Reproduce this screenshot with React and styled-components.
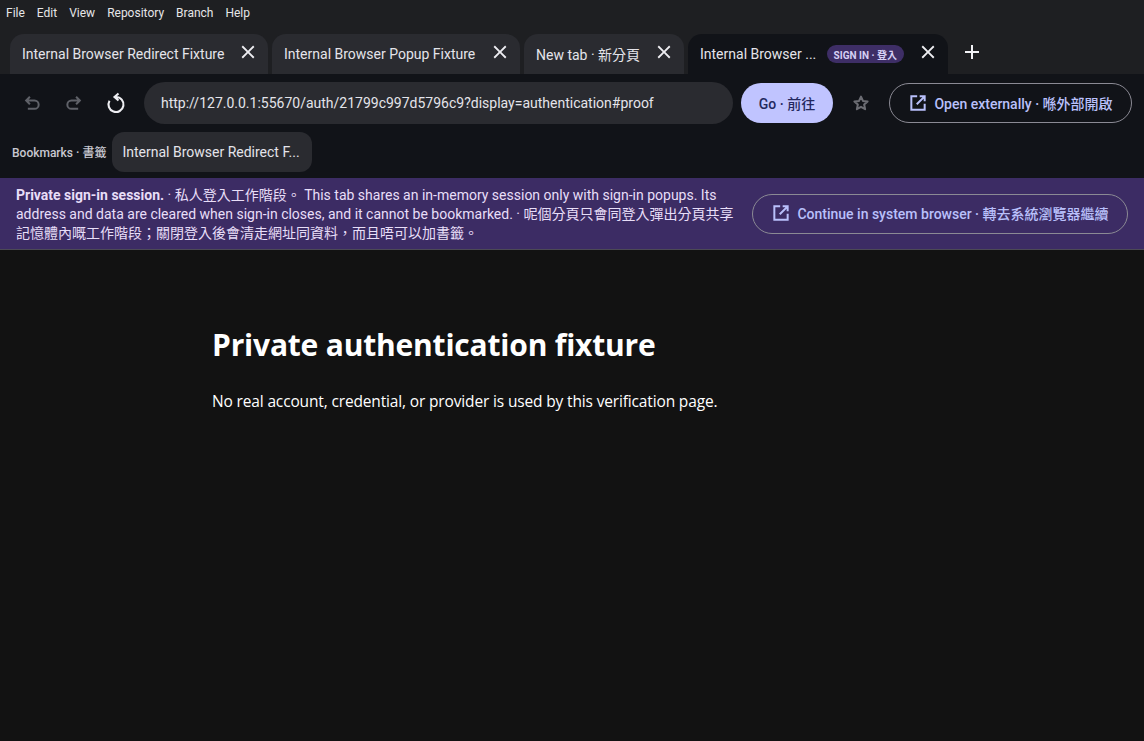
import React from "react";
import styled, { createGlobalStyle } from "styled-components";
import { MdClose, MdAdd } from "react-icons/md";

const cjk = `Roboto, "Noto Sans CJK TC", sans-serif`;

const GlobalStyle = createGlobalStyle`
  html, body { margin: 0; padding: 0; background: #121212; }
  #root { min-height: 100vh; }
  * { box-sizing: border-box; }
`;

const Page = styled.div`
  width: 1144px;
  height: 741px;
  overflow: hidden;
  display: flex;
  flex-direction: column;
  background: #121212;
  font-family: ${cjk};
`;

const MenuBar = styled.div`
  height: 26px;
  padding: 0 6px;
  display: flex;
  align-items: center;
  gap: 12px;
  background: #1e1f22;
  color: #e6e6e8;
  font-size: 12px;
`;

const TabStrip = styled.div`
  height: 48px;
  padding: 8px 10px 0;
  display: flex;
  gap: 4px;
  background: #1e1f22;
`;

const Tab = styled.div`
  width: ${(p) => p.$width}px;
  height: 40px;
  padding: 0 9px 0 12px;
  display: flex;
  align-items: center;
  gap: 8px;
  border-radius: 14px 14px 0 0;
  background: ${(p) => (p.$active ? "#111318" : "#2a2b30")};
  color: #e4e4ea;
  font-size: 14px;
`;

const TabTitle = styled.span`
  flex: 1;
  white-space: nowrap;
  overflow: hidden;
  text-overflow: ellipsis;
`;

const Badge = styled.span`
  height: 18px;
  margin-right: 5px;
  padding: 0 7px;
  display: flex;
  align-items: center;
  border-radius: 9px;
  background: #3e2e66;
  color: #d6d0f5;
  font-size: 10px;
  font-weight: 700;
  white-space: nowrap;
`;

const CloseIcon = styled(MdClose)`
  flex: none;
  font-size: 22px;
  color: #eeeef2;
  margin-top: -5px;
`;

const NewTab = styled(MdAdd)`
  align-self: center;
  margin: -4px 0 0 8px;
  font-size: 24px;
  color: #f2f2f6;
`;

const Toolbar = styled.div`
  height: 58px;
  padding: 0 12px 0 11px;
  display: flex;
  align-items: center;
  background: #111318;
`;

const NavButton = styled.div`
  width: 42px;
  height: 42px;
  display: flex;
  align-items: center;
  justify-content: center;
  color: ${(p) => (p.$on ? "#eeeef2" : "#5f6168")};
`;

const UrlBar = styled.div`
  flex: 1;
  height: 42px;
  margin-left: 7px;
  padding: 0 17px;
  display: flex;
  align-items: center;
  border-radius: 21px;
  background: #2a2b30;
  color: #e4e4ea;
  font-size: 14px;
`;

const GoButton = styled.div`
  width: 92px;
  height: 40px;
  margin-left: 8px;
  display: flex;
  align-items: center;
  justify-content: center;
  border-radius: 20px;
  background: #c0c4ff;
  color: #23285e;
  font-size: 14px;
  font-weight: 500;
`;

const StarButton = styled.div`
  width: 56px;
  display: flex;
  justify-content: center;
  color: #6c6d73;
`;

const OutlineButton = styled.div`
  height: 40px;
  width: ${(p) => p.$width}px;
  padding-bottom: ${(p) => (p.$lift ? 2 : 0)}px;
  display: flex;
  align-items: center;
  justify-content: center;
  gap: 6px;
  border: 1px solid #8b8a94;
  border-radius: 20px;
  color: #b9c0fb;
  font-size: 14px;
  font-weight: 500;
  white-space: nowrap;
`;

const BookmarkBar = styled.div`
  height: 46px;
  padding: 0 12px;
  display: flex;
  align-items: flex-start;
  gap: 6px;
  background: #111318;
`;

const BookmarkLabel = styled.span`
  height: 38px;
  display: flex;
  align-items: center;
  color: #c8c8d0;
  font-size: 12px;
  font-weight: 500;
`;

const BookmarkChip = styled.div`
  width: 200px;
  height: 40px;
  padding: 0 10px;
  display: flex;
  align-items: center;
  border-radius: 12px;
  background: #2a2b30;
  color: #e4e4ea;
  font-size: 14px;
`;

const Banner = styled.div`
  height: 72px;
  padding: 0 16px;
  display: flex;
  align-items: center;
  justify-content: space-between;
  background: #3c2c64;
  border-bottom: 1px solid #4c4a55;
`;

const BannerText = styled.p`
  width: 722px;
  margin: 2px 0 0;
  color: #e8def8;
  font-size: 14px;
  line-height: 19px;
  strong { font-weight: 700; }
`;

const Content = styled.main`
  padding: 66px 0 0 212px;
  color: #fff;
  font-family: "Open Sans", "Noto Sans", sans-serif;
`;

const Heading = styled.h1`
  margin: 0;
  font-size: 30px;
  letter-spacing: -0.2px;
  line-height: 58px;
  font-weight: 700;
`;

const Lead = styled.p`
  margin: 15px 0 0;
  font-size: 15.5px;
  letter-spacing: -0.15px;
  line-height: 24px;
`;

const UndoIcon = ({ flip }) => (
  <svg width="20" height="20" viewBox="0 0 24 24" fill="none" stroke="currentColor" strokeWidth="2.4" style={flip ? { transform: "scaleX(-1)" } : undefined}>
    <path d="M9.5 4.5 5 9l4.5 4.5M5 9h10a5 5 0 0 1 0 10H7" />
  </svg>
);

const ReloadIcon = () => (
  <svg width="24" height="24" viewBox="0 0 24 24" fill="none" stroke="currentColor" strokeWidth="2.1">
    <path d="M12 6a7.5 7.5 0 1 1-6.5 3.75M14.5 2.5 10.5 6l4 3.5" />
  </svg>
);

const StarIcon = () => (
  <svg width="18" height="18" viewBox="0 0 24 24" fill="none" stroke="currentColor" strokeWidth="2.7" strokeLinejoin="round">
    <polygon points="12,3.5 14.6,9.2 20.8,9.9 16.2,14.1 17.5,20.2 12,17.1 6.5,20.2 7.8,14.1 3.2,9.9 9.4,9.2" />
  </svg>
);

const OpenIcon = () => (
  <svg width="20" height="20" viewBox="0 0 24 24" fill="none" stroke="currentColor" strokeWidth="2.4">
    <path d="M11 4H4v16h16v-7M10.5 13.5 20 4M14 4h6v6" />
  </svg>
);

const menu = ["File", "Edit", "View", "Repository", "Branch", "Help"];

const tabs = [
  { title: "Internal Browser Redirect Fixture", width: 258 },
  { title: "Internal Browser Popup Fixture", width: 248 },
  { title: "New tab · 新分頁", width: 160 },
  { title: "Internal Browser ...", width: 260, active: true, badge: "SIGN IN · 登入" },
];

export default function App() {
  return (
    <Page>
      <GlobalStyle />
      <MenuBar>
        {menu.map((item) => (
          <span key={item}>{item}</span>
        ))}
      </MenuBar>
      <TabStrip>
        {tabs.map((tab) => (
          <Tab key={tab.title} $width={tab.width} $active={tab.active}>
            <TabTitle>{tab.title}</TabTitle>
            {tab.badge && <Badge>{tab.badge}</Badge>}
            <CloseIcon />
          </Tab>
        ))}
        <NewTab />
      </TabStrip>
      <Toolbar>
        <NavButton>
          <UndoIcon />
        </NavButton>
        <NavButton>
          <UndoIcon flip />
        </NavButton>
        <NavButton $on>
          <ReloadIcon />
        </NavButton>
        <UrlBar>http://127.0.0.1:55670/auth/21799c997d5796c9?display=authentication#proof</UrlBar>
        <GoButton>Go · 前往</GoButton>
        <StarButton>
          <StarIcon />
        </StarButton>
        <OutlineButton $width={243}>
          <OpenIcon />
          Open externally · 喺外部開啟
        </OutlineButton>
      </Toolbar>
      <BookmarkBar>
        <BookmarkLabel>Bookmarks · 書籤</BookmarkLabel>
        <BookmarkChip>Internal Browser Redirect F...</BookmarkChip>
      </BookmarkBar>
      <Banner>
        <BannerText>
          <strong>Private sign-in session.</strong> · 私人登入工作階段。 This tab shares an in-memory session only with
          sign-in popups. Its address and data are cleared when sign-in closes, and it cannot be bookmarked. ·
          呢個分頁只會同登入彈出分頁共享記憶體內嘅工作階段；關閉登入後會清走網址同資料，而且唔可以加書籤。
        </BannerText>
        <OutlineButton $width={376} $lift>
          <OpenIcon />
          Continue in system browser · 轉去系統瀏覽器繼續
        </OutlineButton>
      </Banner>
      <Content>
        <Heading>Private authentication fixture</Heading>
        <Lead>No real account, credential, or provider is used by this verification page.</Lead>
      </Content>
    </Page>
  );
}
